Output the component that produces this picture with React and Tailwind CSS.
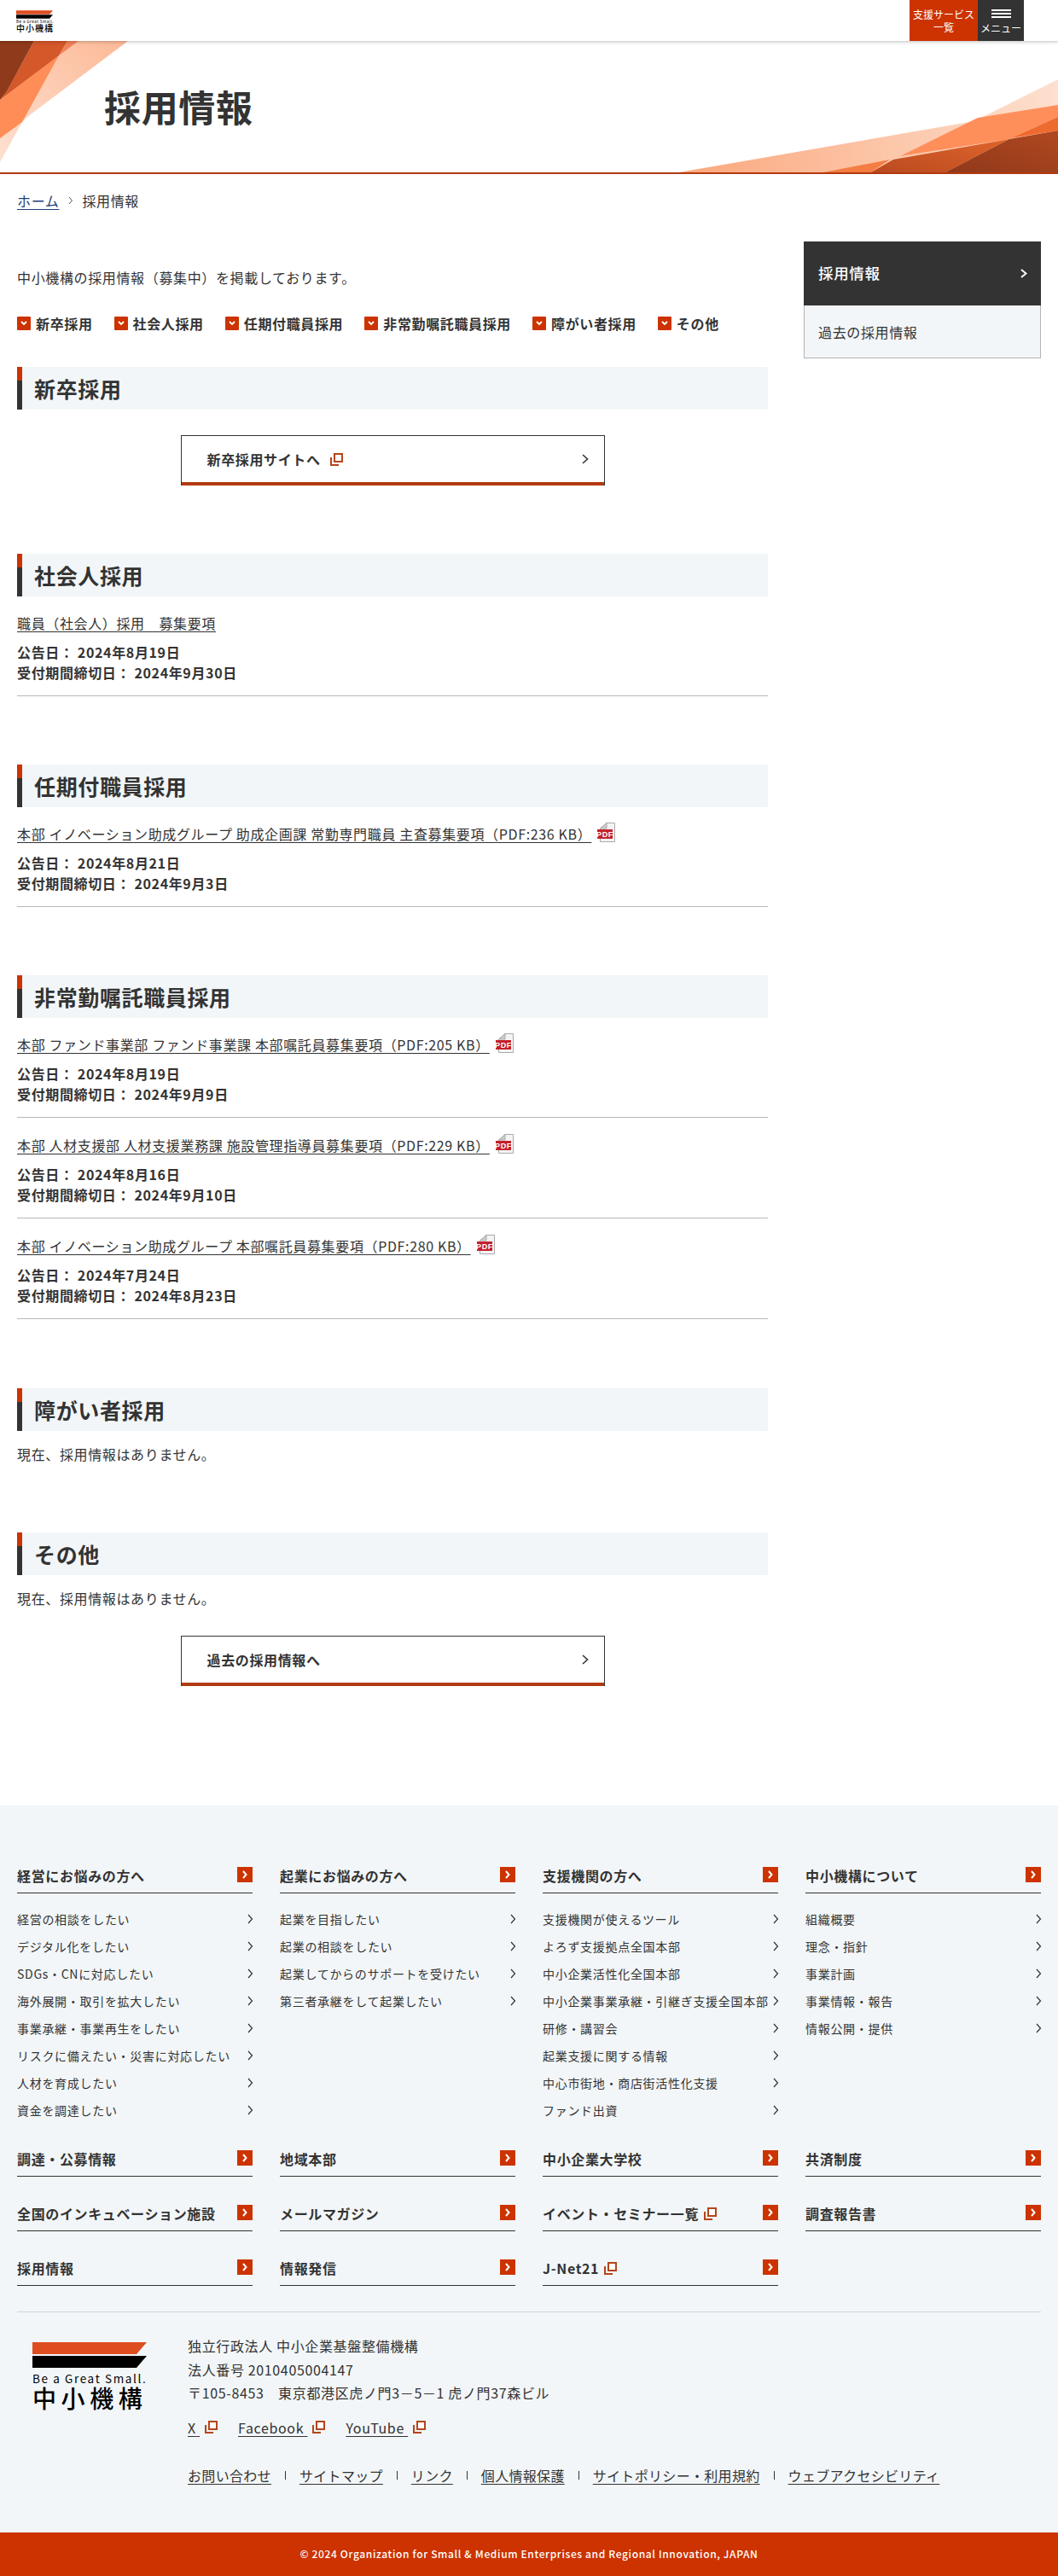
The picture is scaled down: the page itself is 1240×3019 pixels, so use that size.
const jp = 'font-["Noto_Sans_CJK_JP","Noto_Sans",sans-serif]';

const anchors = ['新卒採用', '社会人採用', '任期付職員採用', '非常勤嘱託職員採用', '障がい者採用', 'その他'];

const footerCols = [
  {
    title: '経営にお悩みの方へ',
    items: ['経営の相談をしたい', 'デジタル化をしたい', 'SDGs・CNに対応したい', '海外展開・取引を拡大したい', '事業承継・事業再生をしたい', 'リスクに備えたい・災害に対応したい', '人材を育成したい', '資金を調達したい'],
  },
  {
    title: '起業にお悩みの方へ',
    items: ['起業を目指したい', '起業の相談をしたい', '起業してからのサポートを受けたい', '第三者承継をして起業したい'],
  },
  {
    title: '支援機関の方へ',
    items: ['支援機関が使えるツール', 'よろず支援拠点全国本部', '中小企業活性化全国本部', '中小企業事業承継・引継ぎ支援全国本部', '研修・講習会', '起業支援に関する情報', '中心市街地・商店街活性化支援', 'ファンド出資'],
  },
  {
    title: '中小機構について',
    items: ['組織概要', '理念・指針', '事業計画', '事業情報・報告', '情報公開・提供'],
  },
];

const footerLinks = [
  { label: '調達・公募情報' },
  { label: '地域本部' },
  { label: '中小企業大学校' },
  { label: '共済制度' },
  { label: '全国のインキュベーション施設' },
  { label: 'メールマガジン' },
  { label: 'イベント・セミナー一覧', ext: true },
  { label: '調査報告書' },
  { label: '採用情報' },
  { label: '情報発信' },
  { label: 'J-Net21', ext: true },
];

const bottomLinks = ['お問い合わせ', 'サイトマップ', 'リンク', '個人情報保護', 'サイトポリシー・利用規約', 'ウェブアクセシビリティ'];

function Chev({ w = 7, h = 12, sw = 1.2, color = '#333', className = '' }) {
  return (
    <svg width={w} height={h} viewBox={`0 0 ${w} ${h}`} className={`shrink-0 ${className}`}>
      <path d={`M1 1L${w - 1.5} ${h / 2}L1 ${h - 1}`} fill="none" stroke={color} strokeWidth={sw} />
    </svg>
  );
}

function ExtIcon({ className = '' }) {
  return (
    <svg width="15" height="15" viewBox="0 0 15 15" className={`inline-block shrink-0 ${className}`}>
      <path d="M1 5v9h9" fill="none" stroke="#b5451b" strokeWidth="2" />
      <rect x="5" y="1" width="9" height="9" fill="#fff" stroke="#b5451b" strokeWidth="2" />
    </svg>
  );
}

function PdfIcon() {
  return (
    <svg width="22" height="23" viewBox="0 0 22 23" className="ml-[6px] mt-[-3px] inline-block shrink-0">
      <path d="M4.5 7 12 .5h9.5v22h-17z" fill="#f4f4f4" stroke="#aaa" />
      <path d="M12 .5V7H4.5z" fill="#ccc" stroke="#aaa" />
      <rect x="1" y="8" width="18" height="11" fill="#c4202c" />
      <text x="10" y="17" textAnchor="middle" fontSize="9" fontWeight="700" fill="#fff" fontFamily="Liberation Sans">PDF</text>
    </svg>
  );
}

function Bars({ w, h }) {
  return (
    <svg width={w} height={h} viewBox="0 0 134 30" className="block">
      <polygon points="0,0 134,0 122,14 0,14" fill="#dd4d1f" />
      <polygon points="0,16 134,16 122,30 0,30" fill="#000" />
    </svg>
  );
}

function Hero() {
  return (
    <section className="relative h-[156px] overflow-hidden border-b-2 border-[#b23a10]">
      <svg className="absolute inset-0" width="1240" height="156" viewBox="0 48 1240 156">
        <defs>
          <linearGradient id="peachR" x1="0" x2="1" y1="0" y2="0">
            <stop offset="0" stopColor="#fba67a" />
            <stop offset="1" stopColor="#fde0cf" />
          </linearGradient>
          <linearGradient id="peachL" x1="0" x2="1" y1="1" y2="0">
            <stop offset="0" stopColor="#fde0d0" />
            <stop offset="1" stopColor="#fdb996" />
          </linearGradient>
          <linearGradient id="midR" x1="0" x2="1" y1="1" y2="0">
            <stop offset="0" stopColor="#b8491f" />
            <stop offset="1" stopColor="#e0652c" />
          </linearGradient>
          <linearGradient id="darkR" x1="0" x2="1" y1="1" y2="0">
            <stop offset="0" stopColor="#8f381a" />
            <stop offset="1" stopColor="#b04820" />
          </linearGradient>
        </defs>
        <polygon points="71,48 150,48 32,137 26,143 0,190 0,100" fill="url(#peachL)" />
        <polygon points="0,162 26,143 69,65 0,117" fill="#ff8d58" />
        <polygon points="40,48 79,48 69,65 0,117 8,107" fill="#d4582a" />
        <polygon points="0,48 40,48 8,107 0,117" fill="#8f3a1b" />
        <polygon points="79,48 92,48 69,65" fill="#f0825a" />
        <polygon points="790,203 1142,142 1240,93 1240,203" fill="url(#peachR)" />
        <polygon points="1146,138 1240,123 1240,137 1183,163 1055,183" fill="#ff8f5a" />
        <polygon points="1240,137 1240,153 1185,162" fill="#ee6a2f" />
        <polygon points="960,203 1043,187 1019,203" fill="#f37d42" />
        <polygon points="1019,203 1047,187 1183,163 1106,203" fill="url(#midR)" />
        <polygon points="1106,203 1183,163 1240,153 1240,203" fill="url(#darkR)" />
      </svg>
      <h1 className="relative pl-[122px] pt-[44px] text-[43px] font-bold leading-[64px] text-[#333]">採用情報</h1>
    </section>
  );
}

function Heading({ children }) {
  return (
    <div className="relative h-[50px] border-l-[6px] border-[#333] bg-[#f2f6f8] pl-[14px]">
      <span className="absolute left-[-6px] top-0 h-[16px] w-[6px] bg-[#cc3300]" />
      <h2 className="text-[25px] font-bold leading-[50px] text-[#333]">{children}</h2>
    </div>
  );
}

function BigButton({ label, ext }) {
  return (
    <a className="mx-auto flex h-[59px] w-[497px] items-center justify-between border border-b-0 border-[#333] bg-white pb-[4px] pl-[30px] pr-[18px] font-bold text-[#333] shadow-[inset_0_-4px_0_#b23a10]">
      <span className="flex items-center gap-[11px]">
        {label}
        {ext && <ExtIcon />}
      </span>
      <Chev w={8} h={12} sw={1.6} />
    </a>
  );
}

function Job({ title, pdf, date, deadline, first }) {
  return (
    <div className={`border-b border-[#b8b8b8] pb-[15px] ${first ? 'pt-[19px]' : 'pt-[20px]'}`}>
      <p className="flex items-center leading-[24px]">
        <a className="text-[#333] underline decoration-1 underline-offset-[3px]">{title}</a>
        {pdf && <PdfIcon />}
      </p>
      <p className="mt-[10px] font-bold leading-[24px]">公告日： 2024年{date}</p>
      <p className="font-bold leading-[24px]">受付期間締切日： 2024年{deadline}</p>
    </div>
  );
}

function FooterTitle({ label, ext }) {
  return (
    <a className="flex h-[33px] items-start justify-between border-b border-[#333] font-bold leading-[24px] text-[#333]">
      <span className="flex items-center gap-[6px]">
        {label}
        {ext && <ExtIcon />}
      </span>
      <span className="mt-[2px] flex h-[18px] w-[18px] items-center justify-center bg-[#cc3300]">
        <Chev w={6} h={10} sw={2} color="#fff" />
      </span>
    </a>
  );
}

export default function App() {
  return (
    <div className={`${jp} w-[1240px] bg-white text-[16px] tracking-[0.04em] text-[#333]`}>
      {/* header */}
      <header className="relative z-10 flex h-[48px] justify-between bg-white pr-[40px] shadow-[0_1px_4px_rgba(0,0,0,0.25)]">
        <div className="box-content w-[43px] pl-[19px] pt-[12px]">
          <Bars w={43} h={10} />
          <div className="mt-[1px] whitespace-nowrap text-[4.5px] font-medium leading-[5px] tracking-[0.1em]">Be a Great Small.</div>
          <div className="whitespace-nowrap text-[10px] font-medium leading-[10px] tracking-[0.1em] text-black">中小機構</div>
        </div>
        <div className="flex">
          <a className="flex w-[80px] flex-col items-center justify-center bg-[#cc3300] text-[12px] leading-[15px] tracking-normal text-white">
            <span>支援サービス</span>
            <span>一覧</span>
          </a>
          <a className="flex w-[54px] flex-col items-center bg-[#333] pt-[11px] text-[12px] leading-[15px] tracking-normal text-white">
            <span className="relative block h-[10px] w-[23px] border-y-2 border-white">
              <span className="absolute left-0 right-0 top-[2px] h-[2px] bg-white" />
            </span>
            <span className="mt-[4px] whitespace-nowrap">メニュー</span>
          </a>
        </div>
      </header>

      <Hero />

      {/* breadcrumb */}
      <nav className="mt-[19px] flex h-[24px] items-center pl-[20px] leading-[24px]">
        <a className="text-[#1d3f78] underline underline-offset-[3px]">ホーム</a>
        <Chev w={6} h={10} sw={1} color="#555" className="ml-[11px] mr-[10px]" />
        <span>採用情報</span>
      </nav>

      {/* main */}
      <div className="flex justify-between px-[20px] pt-[36px]">
        <main className="w-[880px] pt-[30px]">
          <p className="leading-[24px]">中小機構の採用情報（募集中）を掲載しております。</p>
          <ul className="mt-[30px] flex gap-[25px] font-bold leading-[24px]">
            {anchors.map((a) => (
              <li key={a} className="flex items-center gap-[6px]">
                <span className="flex h-[16px] w-[16px] items-center justify-center rounded-[1px] bg-[#cc3300]">
                  <svg width="8" height="6" viewBox="0 0 8 6"><path d="M1 1l3 3 3-3" fill="none" stroke="#fff" strokeWidth="1.8" /></svg>
                </span>
                {a}
              </li>
            ))}
          </ul>

          <div className="mt-[39px]">
            <Heading>新卒採用</Heading>
            <div className="mt-[30px]"><BigButton label="新卒採用サイトへ" ext /></div>
          </div>

          <div className="mt-[80px]">
            <Heading>社会人採用</Heading>
            <Job first title="職員（社会人）採用　募集要項" date="8月19日" deadline="9月30日" />
          </div>

          <div className="mt-[80px]">
            <Heading>任期付職員採用</Heading>
            <Job first pdf title="本部 イノベーション助成グループ 助成企画課 常勤専門職員 主査募集要項（PDF:236 KB）" date="8月21日" deadline="9月3日" />
          </div>

          <div className="mt-[80px]">
            <Heading>非常勤嘱託職員採用</Heading>
            <Job first pdf title="本部 ファンド事業部 ファンド事業課 本部嘱託員募集要項（PDF:205 KB）" date="8月19日" deadline="9月9日" />
            <Job pdf title="本部 人材支援部 人材支援業務課 施設管理指導員募集要項（PDF:229 KB）" date="8月16日" deadline="9月10日" />
            <Job pdf title="本部 イノベーション助成グループ 本部嘱託員募集要項（PDF:280 KB）" date="7月24日" deadline="8月23日" />
          </div>

          <div className="mt-[81px]">
            <Heading>障がい者採用</Heading>
            <p className="mt-[15px] leading-[24px]">現在、採用情報はありません。</p>
          </div>

          <div className="mt-[80px]">
            <Heading>その他</Heading>
            <p className="mt-[15px] leading-[24px]">現在、採用情報はありません。</p>
            <div className="mt-[32px]"><BigButton label="過去の採用情報へ" /></div>
          </div>
        </main>

        <aside className="w-[278px]">
          <a className="flex h-[75px] items-center justify-between bg-[#333] pl-[17px] pr-[16px] text-[17.5px] font-medium text-white">
            採用情報
            <Chev w={8} h={11} sw={2} color="#fff" />
          </a>
          <a className="flex h-[62px] items-center border border-t-0 border-[#b3b3b3] bg-[#f2f6f8] pl-[16px]">過去の採用情報</a>
        </aside>
      </div>

      {/* footer */}
      <footer className="mt-[140px] bg-[#f2f6f8]">
        <div className="px-[20px] pt-[70px]">
          <div className="grid grid-cols-4 gap-x-[32px]">
            {footerCols.map((col) => (
              <div key={col.title}>
                <FooterTitle label={col.title} />
                <ul className="mt-[14px]">
                  {col.items.map((item) => (
                    <li key={item} className="flex h-[32px] items-center justify-between whitespace-nowrap text-[14px] tracking-[0.05em]">
                      {item}
                      <Chev w={7} h={12} className="mr-[-1px]" />
                    </li>
                  ))}
                </ul>
              </div>
            ))}
          </div>
          <div className="mt-[29px] grid grid-cols-4 gap-x-[32px] gap-y-[31px] border-b border-[#cfd4d6] pb-[30px]">
            {footerLinks.map((l) => (
              <FooterTitle key={l.label} label={l.label} ext={l.ext} />
            ))}
          </div>
        </div>

        <div className="flex px-[38px] pt-[26px]">
          <div className="w-[182px] pt-[9px]">
            <Bars w={134} h={30} />
            <div className="mt-[2px] w-[134px] whitespace-nowrap text-[13.5px] leading-[20px] tracking-[0.12em] text-black">Be a Great Small.</div>
            <div className="mt-[-2px] w-[134px] whitespace-nowrap text-[28px] font-medium leading-[30px] tracking-[0.2em] text-black">中小機構</div>
          </div>
          <div>
            <p className="leading-[27.5px]">独立行政法人 中小企業基盤整備機構</p>
            <p className="leading-[27.5px]">法人番号 2010405004147</p>
            <p className="leading-[27.5px]">〒105-8453　東京都港区虎ノ門3－5－1 虎ノ門37森ビル</p>
            <div className="mt-[14px] flex gap-[24px] leading-[24px]">
              {['X', 'Facebook', 'YouTube'].map((s) => (
                <a key={s} className="flex items-center gap-[6px]">
                  <span className="underline underline-offset-[3px]">{s}{'\u00a0'}</span>
                  <ExtIcon />
                </a>
              ))}
            </div>
            <ul className="mt-[32px] flex leading-[24px] tracking-[0.02em]">
              {bottomLinks.map((l, i) => (
                <li key={l} className="flex items-center">
                  {i > 0 && <span className="mx-[16px] h-[10px] w-px bg-[#333]" />}
                  <a className="underline underline-offset-[3px]">{l}</a>
                </li>
              ))}
            </ul>
          </div>
        </div>

        <div className="mt-[55px] flex h-[51px] items-center justify-center bg-[#cc3300] text-[12px] font-medium text-white">
          © 2024 Organization for Small &amp; Medium Enterprises and Regional Innovation, JAPAN
        </div>
      </footer>
    </div>
  );
}
